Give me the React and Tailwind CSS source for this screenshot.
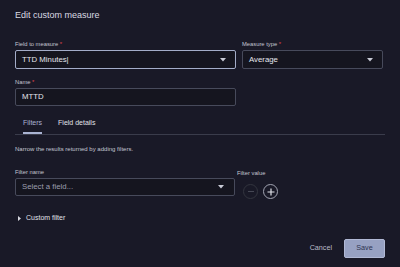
import { useState } from 'react'

const Caret = () => (
  <svg width="6" height="4" viewBox="0 0 6 4" className="shrink-0">
    <path d="M0 0 L6 0 L3 3.5 Z" fill="#c9cbd6" />
  </svg>
)

const Label = ({ children, required }) => (
  <div className="h-[8px] leading-[8px] text-[5.8px] text-[#c4c6d2]">
    {children}
    {required && <span className="text-[#e0474f]"> *</span>}
  </div>
)

export default function App() {
  const [tab, setTab] = useState('filters')

  return (
    <div
      className="w-[400px] h-[267px] bg-[#191927] px-[15px] flex flex-col overflow-hidden"
      style={{ fontFamily: '"Liberation Sans", Arial, sans-serif' }}
    >
      <div className="pt-[9px] h-[21px] leading-[12px] text-[9px] text-[#d9dae2]">
        Edit custom measure
      </div>

      {/* field + measure type */}
      <div className="mt-[19px] flex gap-[6px]">
        <div className="w-[221px]">
          <Label required>Field to measure</Label>
          <div className="mt-[2px] h-[19px] rounded-[2px] border border-[#a3acc8] bg-[#15151f] flex items-center justify-between pl-[6px] pr-[9px]">
            <span className="text-[7.8px] text-[#e6e7ee]">TTD Minutes|</span>
            <Caret />
          </div>
        </div>
        <div className="w-[141px]">
          <Label required>Measure type</Label>
          <div className="mt-[2px] h-[19px] rounded-[2px] border border-[#474a5b] bg-[#15151f] flex items-center justify-between pl-[6px] pr-[9px]">
            <span className="text-[7.8px] text-[#e6e7ee]">Average</span>
            <Caret />
          </div>
        </div>
      </div>

      {/* name */}
      <div className="mt-[9px] w-[221px]">
        <Label required>Name</Label>
        <div className="mt-[2px] h-[18px] rounded-[2px] border border-[#474a5b] bg-[#15151f] flex items-center pl-[6px]">
          <span className="text-[7.8px] text-[#e6e7ee]">MTTD</span>
        </div>
      </div>

      {/* tabs */}
      <div className="mt-[8px] flex border-b border-[#3a3c4b]">
        {[
          { id: 'filters', label: 'Filters' },
          { id: 'details', label: 'Field details' },
        ].map(t => (
          <button
            key={t.id}
            onClick={() => setTab(t.id)}
            className="px-[8px] pt-[4px] flex"
          >
            <span
              className={`h-[16px] leading-[10px] text-[7px] border-b-2 ${
                tab === t.id
                  ? 'text-[#a9b3d2] border-[#a9b3d2]'
                  : 'text-[#e0e1e8] border-transparent'
              }`}
            >
              {t.label}
            </span>
          </button>
        ))}
      </div>

      <div className="mt-[10px] h-[8px] leading-[8px] text-[6px] text-[#c4c6d2]">
        Narrow the results returned by adding filters.
      </div>

      {/* filter row */}
      <div className="mt-[15px] flex items-start">
        <div className="w-[220px]">
          <Label>Filter name</Label>
          <div className="mt-[2px] h-[18px] rounded-[2px] border border-[#474a5b] bg-[#15151f] flex items-center justify-between pl-[6px] pr-[10px]">
            <span className="text-[7.8px] text-[#9c9eae]">Select a field...</span>
            <Caret />
          </div>
        </div>
        <div className="ml-[2px] pt-[1px]">
          <Label>Filter value</Label>
          <div className="mt-[7px] ml-[6px] flex gap-[5px]">
            <div className="w-[15px] h-[15px] rounded-full border border-[#33353f] flex items-center justify-center">
              <div className="w-[6px] h-px bg-[#464855]" />
            </div>
            <div className="w-[15px] h-[15px] rounded-full border border-[#a2a4b2] flex items-center justify-center">
              <svg width="8" height="8" viewBox="0 0 8 8">
                <path d="M4 0.5 V7.5 M0.5 4 H7.5" stroke="#e2e3ea" strokeWidth="1.2" />
              </svg>
            </div>
          </div>
        </div>
      </div>

      {/* custom filter */}
      <div className="mt-[14px] h-[10px] flex items-center pl-[3px] gap-[5px]">
        <svg width="3" height="5" viewBox="0 0 3 5">
          <path d="M0 0 L3 2.5 L0 5 Z" fill="#d6d7df" />
        </svg>
        <span className="text-[7px] text-[#e0e1e8]">Custom filter</span>
      </div>

      {/* footer */}
      <div className="mt-auto pb-[9px] flex justify-end items-center gap-[12px]">
        <button className="text-[7.2px] text-[#b9bbc8]">Cancel</button>
        <button className="w-[41px] h-[19px] rounded-[2px] bg-[#97a1c2] border border-[#b1b9d5] text-[7.2px] text-[#2c3250]">
          Save
        </button>
      </div>
    </div>
  )
}
